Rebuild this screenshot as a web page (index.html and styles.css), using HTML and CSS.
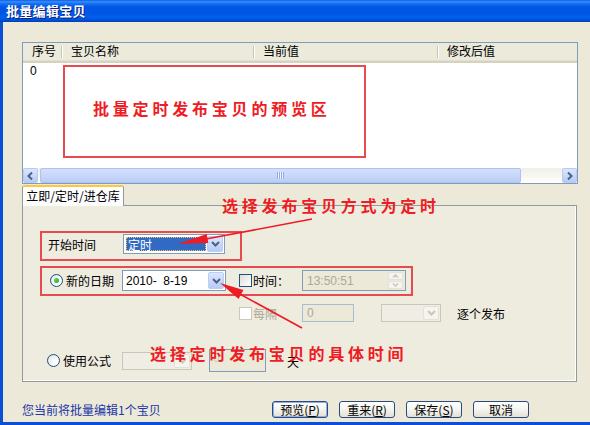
FILE: index.html
```html
<!DOCTYPE html>
<html lang="zh-CN">
  <head>
    <meta charset="UTF-8" />
    <meta name="viewport" content="width=device-width, initial-scale=1.0" />
    <title>批量编辑宝贝</title>
    <link rel="stylesheet" href="styles.css">
  </head>
  <body>
    <div class="window">
      <div class="titlebar">批量编辑宝贝</div>

      <div class="client">
        <div class="listview">
          <div class="lv-header">
            <div class="lv-col col-no">序号</div>
            <div class="lv-col col-name">宝贝名称</div>
            <div class="lv-col col-cur">当前值</div>
            <div class="lv-col col-new">修改后值</div>
          </div>
          <div class="lv-body">
            <div class="lv-row">0</div>
          </div>
          <div class="hscroll">
            <div class="sb-btn">
              <svg width="7" height="8" viewBox="0 0 7 8"><polyline points="5,0.5 1.5,4 5,7.5" fill="none" stroke="#4d6185" stroke-width="2"/></svg>
            </div>
            <div class="sb-thumb"><span class="grip"></span></div>
            <div class="sb-track"></div>
            <div class="sb-btn">
              <svg width="7" height="8" viewBox="0 0 7 8"><polyline points="2,0.5 5.5,4 2,7.5" fill="none" stroke="#4d6185" stroke-width="2"/></svg>
            </div>
          </div>
        </div>

        <div class="tabs">
          <div class="tab-strip">
            <div class="tab active">立即/定时/进仓库</div>
          </div>
          <div class="tab-panel">
            <div class="row row-start">
              <span class="lead">开始时间</span>
              <div class="combo combo-start">
                <span class="combo-value"><span class="selected">定时</span></span>
                <span class="drop">
                  <svg width="9" height="6" viewBox="0 0 9 6"><polyline points="1,1 4.5,4.5 8,1" fill="none" stroke="#4d6185" stroke-width="2"/></svg>
                </span>
              </div>
            </div>

            <div class="row row-date">
              <label class="lead"><span class="radio checked"></span>新的日期</label>
              <div class="combo combo-date">
                <span class="combo-value">2010-&nbsp;&nbsp;8-19</span>
                <span class="drop">
                  <svg width="9" height="6" viewBox="0 0 9 6"><polyline points="1,1 4.5,4.5 8,1" fill="none" stroke="#4d6185" stroke-width="2"/></svg>
                </span>
              </div>
              <label class="check-cell"><span class="checkbox"></span>时间：</label>
              <div class="edit edit-time disabled">
                <span class="edit-text">13:50:51</span>
                <span class="spin">
                  <span class="spin-half"><svg width="7" height="4" viewBox="0 0 7 4"><polyline points="1,3.5 3.5,1 6,3.5" fill="none" stroke="#c9c7ba" stroke-width="1.5"/></svg></span>
                  <span class="spin-half"><svg width="7" height="4" viewBox="0 0 7 4"><polyline points="1,0.5 3.5,3 6,0.5" fill="none" stroke="#c9c7ba" stroke-width="1.5"/></svg></span>
                </span>
              </div>
            </div>

            <div class="row row-every">
              <label class="check-cell disabled"><span class="checkbox"></span>每隔</label>
              <div class="edit edit-every disabled"><span class="edit-text">0</span></div>
              <div class="combo combo-unit disabled">
                <span class="combo-value"></span>
                <span class="drop">
                  <svg width="9" height="6" viewBox="0 0 9 6"><polyline points="1,1 4.5,4.5 8,1" fill="none" stroke="#c9c7ba" stroke-width="2"/></svg>
                </span>
              </div>
              <span class="one-by-one">逐个发布</span>
            </div>

            <div class="row row-formula">
              <label class="lead"><span class="radio"></span>使用公式</label>
              <div class="combo combo-formula disabled">
                <span class="combo-value"></span>
                <span class="drop">
                  <svg width="9" height="6" viewBox="0 0 9 6"><polyline points="1,1 4.5,4.5 8,1" fill="none" stroke="#c9c7ba" stroke-width="2"/></svg>
                </span>
              </div>
              <div class="edit edit-days"><span class="caret"></span></div>
              <span class="unit">天</span>
            </div>
          </div>
        </div>

        <div class="footer">
          <span class="status">您当前将批量编辑1个宝贝</span>
          <div class="buttons">
            <button class="btn default">预览(<u>P</u>)</button>
            <button class="btn">重来(<u>R</u>)</button>
            <button class="btn">保存(<u>S</u>)</button>
            <button class="btn">取消</button>
          </div>
        </div>
      </div>

      <!-- red annotations drawn over the dialog -->
      <div class="note-box note-list"></div>
      <div class="note-text note-preview">批量定时发布宝贝的预览区</div>
      <div class="note-text note-mode">选择发布宝贝方式为定时</div>
      <div class="note-box note-start"></div>
      <div class="note-box note-date"></div>
      <div class="note-text note-time">选择定时发布宝贝的具体时间</div>
      <svg class="note-arrows" width="590" height="425" viewBox="0 0 590 425">
        <line x1="312" y1="219" x2="206" y2="239" stroke="#ee1c24" stroke-width="1.6"/>
        <polygon points="178,244 206.7,234.1 208.3,242.9" fill="#ee1c24"/>
        <line x1="302" y1="328" x2="238" y2="293" stroke="#ee1c24" stroke-width="1.6"/>
        <polygon points="220,283 243.4,290.1 238.6,298.9" fill="#ee1c24"/>
      </svg>
    </div>
  </body>
</html>
```

FILE: styles.css
```css
:root {
  --face: #ece9d8;
  --frame: #0a4fd6;
  --edit-border: #7f9db9;
  --tab-border: #919b9c;
  --disabled-text: #aca899;
  --note-red: #ee1c24;
}
body {
  margin: 0;
  width: 590px;
  height: 425px;
  overflow: hidden;
  background-color: var(--face);
  font-family: "Liberation Sans", "Noto Sans CJK SC", sans-serif;
  font-size: 12px;
  color: #000;
}
.window {
  position: relative;
  display: flex;
  flex-direction: column;
  height: 425px;
  box-sizing: border-box;
  border-left: 3px solid var(--frame);
  border-bottom: 3px solid var(--frame);
}
.titlebar {
  height: 22px;
  margin-left: -3px;
  padding-left: 6px;
  line-height: 21px;
  font-family: "Noto Sans CJK SC", sans-serif;
  font-size: 13px;
  font-weight: 700;
  letter-spacing: 0.3px;
  color: #fff;
  text-shadow: 1px 1px 0 #0a1e78;
  background: linear-gradient(to bottom, #0a5fe6 0%, #3a8cfa 8%, #1673f5 16%, #0058e6 30%, #0055e3 60%, #0060f2 78%, #0052d8 90%, #0040b0 100%);
}
.client {
  flex: 1;
  display: flex;
  flex-direction: column;
  padding-left: 19px;
}

/* list view */
.listview {
  margin-top: 20px;
  width: 556px;
  height: 142px;
  box-sizing: border-box;
  border: 1px solid var(--edit-border);
  background-color: #fff;
  display: flex;
  flex-direction: column;
}
.lv-header {
  display: flex;
  height: 20px;
  box-sizing: border-box;
  background-color: #ebeadb;
  border-bottom: 2px solid #d6d2c2;
  box-shadow: inset 0 -1px 0 #e2ded0;
}
.lv-col {
  position: relative;
  box-sizing: border-box;
  padding-left: 9px;
  line-height: 18px;
  white-space: nowrap;
}
.lv-col::after {
  content: "";
  position: absolute;
  right: 0;
  top: 3px;
  width: 1px;
  height: 12px;
  background-color: #c7c5b2;
  box-shadow: 1px 0 0 #fff;
}
.col-no { width: 39px; }
.col-name { width: 192px; }
.col-cur { width: 184px; }
.col-new { flex: 1; }
.col-new::after { display: none; }
.lv-body {
  flex: 1;
}
.lv-row {
  padding-left: 7px;
  line-height: 16px;
}
.hscroll {
  display: flex;
  height: 15px;
  background: linear-gradient(to bottom, #f0efe8, #fefefb);
}
.sb-btn {
  width: 15px;
  height: 15px;
  box-sizing: border-box;
  border: 1px solid #b7cbf3;
  border-radius: 2px;
  background: linear-gradient(to bottom, #dbe6fe, #b7cbf6);
  display: flex;
  align-items: center;
  justify-content: center;
}
.sb-thumb {
  width: 481px;
  margin-left: 2px;
  box-sizing: border-box;
  border: 1px solid #aec3ef;
  border-radius: 2px;
  background: linear-gradient(to bottom, #d4e0fc, #bccdf6);
  display: flex;
  align-items: center;
  justify-content: center;
}
.grip {
  width: 7px;
  height: 7px;
  background: repeating-linear-gradient(to right, #8faae6 0 1px, #eef3fe 1px 2px);
}
.sb-track {
  flex: 1;
}

/* tabs */
.tabs {
  margin-top: 1px;
  width: 555px;
}
.tab-strip {
  display: flex;
  height: 20px;
}
.tab {
  position: relative;
  z-index: 1;
  width: 102px;
  height: 21px;
  box-sizing: border-box;
  border: 1px solid var(--tab-border);
  border-top: 2px solid #ffc83c;
  border-bottom: none;
  border-radius: 3px 3px 0 0;
  background: linear-gradient(to bottom, #fff, #fcfcfe);
  text-align: center;
  line-height: 18px;
  font-family: "Noto Sans CJK SC", sans-serif;
}
.tab-panel {
  height: 177px;
  box-sizing: border-box;
  border: 1px solid var(--tab-border);
  background-color: #eeebdf;
  padding-top: 28px;
  box-shadow: inset -1px -1px 0 #fff;
}
.row {
  display: flex;
  align-items: center;
}
.row-start { height: 20px; margin-left: 25px; }
.row-date { height: 21px; margin-top: 16px; margin-left: 27px; }
.row-every { height: 18px; margin-top: 13px; margin-left: 216px; }
.row-formula { height: 23px; margin-top: 27px; margin-left: 24px; }
.lead {
  display: flex;
  align-items: center;
  width: 75px;
  flex-shrink: 0;
  font-family: "Noto Sans CJK SC", sans-serif;
}
.row-date .lead { width: 72px; }
.radio {
  width: 13px;
  height: 13px;
  box-sizing: border-box;
  margin-right: 3px;
  border: 1px solid #1c5180;
  border-radius: 50%;
  background: radial-gradient(circle at 65% 65%, #fff 20%, #dcdcd5 100%);
  display: flex;
  align-items: center;
  justify-content: center;
}
.radio.checked::after {
  content: "";
  width: 5px;
  height: 5px;
  border-radius: 50%;
  background: radial-gradient(circle at 35% 35%, #5fd35f, #21a121);
}
.check-cell {
  display: flex;
  align-items: center;
  width: 63px;
  flex-shrink: 0;
  font-family: "Noto Sans CJK SC", sans-serif;
}
.row-date .check-cell { margin-left: 13px; }
.checkbox {
  width: 13px;
  height: 13px;
  box-sizing: border-box;
  margin-right: 1px;
  border: 1px solid #1c5180;
  background: linear-gradient(135deg, #dcdcd7, #fff);
}
.check-cell.disabled { color: var(--disabled-text); }
.check-cell.disabled .checkbox {
  border-color: #cac8bb;
  background: #fff;
}

/* combo boxes and edits */
.combo {
  display: flex;
  height: 100%;
  box-sizing: border-box;
  border: 1px solid var(--edit-border);
  background-color: #fff;
  padding: 1px;
}
.combo-start { width: 102px; }
.combo-date { width: 104px; }
.combo-unit { width: 60px; margin-left: 27px; }
.combo-formula { width: 70px; height: 18px; }
.combo-value {
  flex: 1;
  display: flex;
  align-items: center;
  padding-left: 2px;
  white-space: nowrap;
}
.combo-start .combo-value { padding: 1px; }
.selected {
  display: flex;
  align-items: center;
  height: 100%;
  width: 100%;
  box-sizing: border-box;
  padding-left: 1px;
  border: 1px dotted #f5c85e;
  background-color: #316ac5;
  color: #fff;
  font-family: "Noto Sans CJK SC", sans-serif;
}
.drop {
  width: 16px;
  box-sizing: border-box;
  border: 1px solid #b9cdf7;
  border-radius: 2px;
  background: linear-gradient(to bottom, #dbe6fe, #b7cbf6);
  display: flex;
  align-items: center;
  justify-content: center;
}
.combo.disabled {
  border-color: #c9c7ba;
  background-color: #f0eee4;
}
.combo.disabled .drop {
  border-color: #e3e2da;
  background: #f5f4ee;
}
.edit {
  display: flex;
  align-items: center;
  height: 100%;
  box-sizing: border-box;
  border: 1px solid var(--edit-border);
  background-color: var(--face);
}
.edit-text { padding-left: 4px; flex: 1; }
.edit.disabled { color: var(--disabled-text); }
.edit-time { width: 104px; padding-right: 2px; }
.edit-every {
  width: 52px;
  border-color: #a9bdd2;
}
.edit-days {
  width: 57px;
  margin-left: 17px;
  align-items: flex-start;
}
.caret {
  width: 3px;
  height: 7px;
  margin: 3px 0 0 4px;
  border: 1px solid #c9c7ba;
  border-radius: 2px;
}
.spin {
  width: 15px;
  height: 17px;
  display: flex;
  flex-direction: column;
  gap: 1px;
}
.spin-half {
  flex: 1;
  border: 1px solid #e3e2da;
  border-radius: 2px;
  background: #f5f4ee;
  display: flex;
  align-items: center;
  justify-content: center;
}
.one-by-one {
  margin-left: 16px;
  font-family: "Noto Sans CJK SC", sans-serif;
}
.unit {
  margin-left: 21px;
  margin-top: 2px;
  font-family: "Noto Sans CJK SC", sans-serif;
}

/* footer */
.footer {
  display: flex;
  align-items: center;
  margin-top: 19px;
  height: 17px;
}
.status {
  width: 250px;
  color: #2236a8;
  font-family: "Noto Sans CJK SC", sans-serif;
}
.buttons {
  display: flex;
  gap: 11px;
}
.btn {
  width: 56px;
  height: 17px;
  padding: 0;
  border: 1px solid #2c4a7c;
  border-radius: 3px;
  background: linear-gradient(to bottom, #fff 0%, #f4f4f0 50%, #e3e0d6 100%);
  font-family: "Noto Sans CJK SC", sans-serif;
  font-size: 12px;
  line-height: 14px;
  color: #000;
}
.btn.default {
  box-shadow: inset 0 0 0 1px #8fb0ea;
}

/* red annotations */
.note-box {
  position: absolute;
  box-sizing: border-box;
  border: 2px solid #e64b50;
}
.note-list { left: 60px; top: 65px; width: 303px; height: 93px; }
.note-start { left: 37px; top: 231px; width: 202px; height: 30px; }
.note-date { left: 37px; top: 266px; width: 373px; height: 30px; }
.note-text {
  position: absolute;
  font-family: "Noto Sans CJK SC", sans-serif;
  font-weight: 700;
  font-size: 16px;
  line-height: 18px;
  letter-spacing: 3.8px;
  color: var(--note-red);
  white-space: nowrap;
}
.note-preview { left: 90px; top: 99px; }
.note-mode { left: 219px; top: 196px; }
.note-time { left: 147px; top: 344px; }
.note-arrows {
  position: absolute;
  left: -3px;
  top: 0;
  pointer-events: none;
}
```
